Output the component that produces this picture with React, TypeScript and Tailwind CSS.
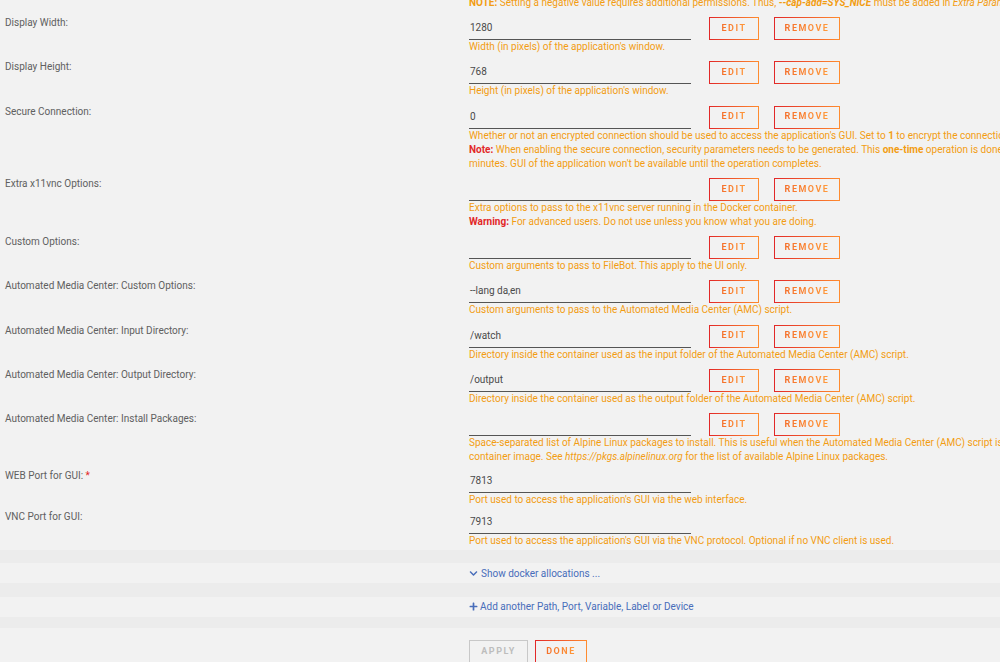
import type { ReactNode } from "react";

type Row = {
  label: ReactNode;
  value: string;
  desc: ReactNode[];
  buttons?: boolean;
  pull?: boolean;
};

const rows: Row[] = [
  {
    label: "Display Width:",
    value: "1280",
    desc: ["Width (in pixels) of the application's window."],
    buttons: true,
  },
  {
    label: "Display Height:",
    value: "768",
    desc: ["Height (in pixels) of the application's window."],
    buttons: true,
  },
  {
    label: "Secure Connection:",
    value: "0",
    desc: [
      <>
        Whether or not an encrypted connection should be used to access the application's GUI. Set to{" "}
        <b>1</b> to encrypt the connection.
      </>,
      <>
        <b className="text-[#e22828]">Note:</b> When enabling the secure connection, security parameters needs to be
        generated. This <b>one-time</b> operation is done during the first start of the container and can take a few
      </>,
      <>minutes. GUI of the application won't be available until the operation completes.</>,
    ],
    buttons: true,
  },
  {
    label: "Extra x11vnc Options:",
    value: "",
    desc: [
      "Extra options to pass to the x11vnc server running in the Docker container.",
      <>
        <b className="text-[#e22828]">Warning:</b> For advanced users. Do not use unless you know what you are doing.
      </>,
    ],
    buttons: true,
  },
  {
    label: "Custom Options:",
    value: "",
    desc: ["Custom arguments to pass to FileBot. This apply to the UI only."],
    buttons: true,
  },
  {
    label: "Automated Media Center: Custom Options:",
    value: "--lang da,en",
    desc: ["Custom arguments to pass to the Automated Media Center (AMC) script."],
    buttons: true,
  },
  {
    label: "Automated Media Center: Input Directory:",
    value: "/watch",
    desc: ["Directory inside the container used as the input folder of the Automated Media Center (AMC) script."],
    buttons: true,
  },
  {
    label: "Automated Media Center: Output Directory:",
    value: "/output",
    desc: ["Directory inside the container used as the output folder of the Automated Media Center (AMC) script."],
    buttons: true,
  },
  {
    label: "Automated Media Center: Install Packages:",
    value: "",
    desc: [
      "Space-separated list of Alpine Linux packages to install. This is useful when the Automated Media Center (AMC) script is configured to use features requiring additional packages.",
      <>
        container image. See <i>https://pkgs.alpinelinux.org</i> for the list of available Alpine Linux packages.
      </>,
    ],
    buttons: true,
  },
  {
    label: (
      <>
        WEB Port for GUI: <span className="text-[#e22828]">*</span>
      </>
    ),
    value: "7813",
    desc: ["Port used to access the application's GUI via the web interface."],
    pull: true,
  },
  {
    label: "VNC Port for GUI:",
    value: "7913",
    desc: ["Port used to access the application's GUI via the VNC protocol. Optional if no VNC client is used."],
  },
];

function GradButton({ children, width }: { children: ReactNode; width: string }) {
  return (
    <button
      type="button"
      className={`${width} h-[23px] border border-solid [border-image:linear-gradient(90deg,#e22828,#ff8c2f)_1] text-[9px] font-bold uppercase tracking-[1.5px]`}
    >
      <span className="bg-gradient-to-r from-[#f5702a] to-[#ff9a3c] bg-clip-text text-transparent">{children}</span>
    </button>
  );
}

function SettingRow({ row }: { row: Row }) {
  const spacing = row.buttons ? "pb-[7.25px]" : row.pull ? "-mt-px pb-[4px]" : "pb-[4px]";
  return (
    <div className={`flex ${spacing}`}>
      <div className="w-[469px] shrink-0 pl-[5px] -mt-px leading-[14px] text-[#606060]">{row.label}</div>
      <div className="flex flex-col">
        <div className="flex items-start">
          <div className="w-[222px] h-[23px] border-b border-[#555] pl-px leading-[22px] text-[#4a4a4a]">
            {row.value}
          </div>
          {row.buttons && (
            <div className="ml-[18px] flex gap-[15px]">
              <GradButton width="w-[50px]">Edit</GradButton>
              <GradButton width="w-[66px]">Remove</GradButton>
            </div>
          )}
        </div>
        <div className="whitespace-nowrap leading-[14px] text-[#f29d12]">
          {row.desc.map((d, i) => (
            <div key={i}>{d}</div>
          ))}
        </div>
      </div>
    </div>
  );
}

export default function App() {
  return (
    <div className="w-[1000px] h-[662px] overflow-hidden bg-[#f2f2f2] font-['Roboto',sans-serif] text-[10px]">
      <div className="-mt-[4px] mb-[7px] pl-[469px] whitespace-nowrap leading-[14px] text-[#f29d12]">
        <b>NOTE:</b> Setting a negative value requires additional permissions. Thus, <b><i>--cap-add=SYS_NICE</i></b>{" "}
        must be added in <i>Extra Parameters</i>.
      </div>
      {rows.map((row, i) => (
        <SettingRow key={i} row={row} />
      ))}
      <div className="-mt-[2px] h-[13px] bg-[#ececec]" />
      <div className="flex h-[20px] items-center pl-[469px] text-[#486dba]">
        <svg viewBox="0 0 448 512" className="mr-[3px] h-[9px] w-[9px] fill-[#486dba]">
          <path d="M207 381.5 12.7 187.1c-9.4-9.4-9.4-24.6 0-33.9l22.7-22.7c9.4-9.4 24.5-9.4 33.9 0L224 284.5l154.7-154c9.4-9.3 24.5-9.3 33.9 0l22.7 22.7c9.4 9.4 9.4 24.6 0 33.9L241 381.5c-9.4 9.3-24.6 9.3-34 0z" />
        </svg>
        Show docker allocations ...
      </div>
      <div className="h-[14px] bg-[#ececec]" />
      <div className="flex h-[20px] items-center pb-[2px] pl-[469px] text-[#486dba]">
        <svg viewBox="0 0 448 512" className="mr-[2px] h-[9px] w-[9px] fill-[#486dba]">
          <path d="M416 208H272V64c0-17.7-14.3-32-32-32h-32c-17.7 0-32 14.3-32 32v144H32c-17.7 0-32 14.3-32 32v32c0 17.7 14.3 32 32 32h144v144c0 17.7 14.3 32 32 32h32c17.7 0 32-14.3 32-32V304h144c17.7 0 32-14.3 32-32v-32c0-17.7-14.3-32-32-32z" />
        </svg>
        Add another Path, Port, Variable, Label or Device
      </div>
      <div className="h-[11px] bg-[#ececec]" />
      <div className="mt-[12px] flex gap-[7px] pl-[469px]">
        <button
          type="button"
          className="h-[23px] w-[59px] border border-[#c8c8c8] text-[9px] font-bold uppercase tracking-[1.5px] text-[#bdbdbd]"
        >
          Apply
        </button>
        <GradButton width="w-[52px]">Done</GradButton>
      </div>
    </div>
  );
}
